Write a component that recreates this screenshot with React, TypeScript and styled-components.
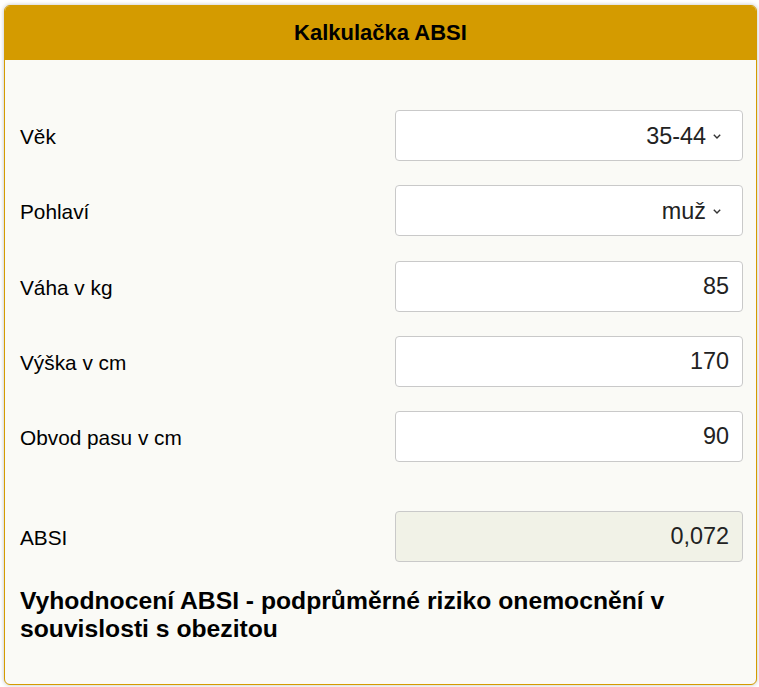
import React from "react";
import styled, { createGlobalStyle } from "styled-components";

const GlobalStyle = createGlobalStyle`
    html, body {
        margin: 0;
        padding: 0;
        background: #ffffff;
        font-family: "Liberation Sans", Arial, sans-serif;
    }
`

interface Field {
    label: string;
    value: string;
    options?: string[];
}

const fields: Field[] = [
    { label: "Věk", value: "35-44", options: ["18-24", "25-34", "35-44", "45-54", "55-64", "65+"] },
    { label: "Pohlaví", value: "muž", options: ["muž", "žena"] },
    { label: "Váha v kg", value: "85" },
    { label: "Výška v cm", value: "170" },
    { label: "Obvod pasu v cm", value: "90" },
];

const Chevron = () => (
    <svg width="10" height="7" viewBox="0 0 10 7">
        <path d="M1.8 1.8 L5 5 L8.2 1.8" fill="none" stroke="#333" strokeWidth="1.4" />
    </svg>
);

const App = () => {
    return (
        <>
            <GlobalStyle />
            <Card>
                <Header>Kalkulačka ABSI</Header>
                <Body>
                    <Form>
                        {fields.map((f) => (
                            <React.Fragment key={f.label}>
                                <Label>{f.label}</Label>
                                {f.options ? (
                                    <SelectWrap>
                                        <StyledSelect defaultValue={f.value}>
                                            {f.options.map((o) => (
                                                <option key={o} value={o}>{o}</option>
                                            ))}
                                        </StyledSelect>
                                        <ChevronBox>
                                            <Chevron />
                                        </ChevronBox>
                                    </SelectWrap>
                                ) : (
                                    <StyledInput defaultValue={f.value} />
                                )}
                            </React.Fragment>
                        ))}
                    </Form>
                    <Form $result>
                        <Label>ABSI</Label>
                        <StyledInput readOnly value="0,072" $readonly />
                    </Form>
                    <Result>
                        Vyhodnocení ABSI - podprůměrné riziko onemocnění v souvislosti s obezitou
                    </Result>
                </Body>
            </Card>
        </>
    );
}

export default App;


const Card = styled.div`
    margin: 5px 2px 2px 4px;
    height: 680px;
    box-sizing: border-box;
    border: 1px solid #d49b00;
    border-radius: 6px;
    background: #fafaf6;
    box-shadow: 0 0 4px rgba(0, 0, 0, 0.25);
    overflow: hidden;
    display: flex;
    flex-direction: column;
`

const Header = styled.div`
    background: #d49b00;
    height: 54px;
    display: flex;
    align-items: center;
    justify-content: center;
    font-size: 22px;
    font-weight: bold;
    color: #000;
`

const Body = styled.div`
    padding: 50px 13px 0 15px;
`

const Form = styled.div<{ $result?: boolean }>`
    display: grid;
    grid-template-columns: 1fr 348px;
    row-gap: 24.3px;
    align-items: center;
    margin-top: ${(p) => (p.$result ? "49px" : "0")};
`

const Label = styled.div`
    font-size: 20.8px;
    color: #000;
    padding-top: 3px;
`

const StyledInput = styled.input<{ $readonly?: boolean }>`
    box-sizing: border-box;
    width: 100%;
    height: 51px;
    border: 1px solid #c9c9c9;
    border-radius: 4px;
    background: ${(p) => (p.$readonly ? "#f1f2e7" : "#ffffff")};
    padding: 0 13px;
    text-align: right;
    font-family: "Liberation Sans", Arial, sans-serif;
    font-size: 23.4px;
    color: #222;
    outline: none;
`

const SelectWrap = styled.div`
    position: relative;
`

const StyledSelect = styled.select`
    box-sizing: border-box;
    width: 100%;
    height: 51px;
    border: 1px solid #c9c9c9;
    border-radius: 4px;
    background: #ffffff;
    padding: 0 36px 0 13px;
    appearance: none;
    text-align: right;
    text-align-last: right;
    font-family: "Liberation Sans", Arial, sans-serif;
    font-size: 23.4px;
    color: #222;
    outline: none;
`

const ChevronBox = styled.span`
    position: absolute;
    right: 21px;
    top: 23px;
    display: flex;
    pointer-events: none;
`

const Result = styled.div`
    margin-top: 25px;
    font-size: 24.7px;
    font-weight: bold;
    line-height: 28px;
    color: #000;
`
